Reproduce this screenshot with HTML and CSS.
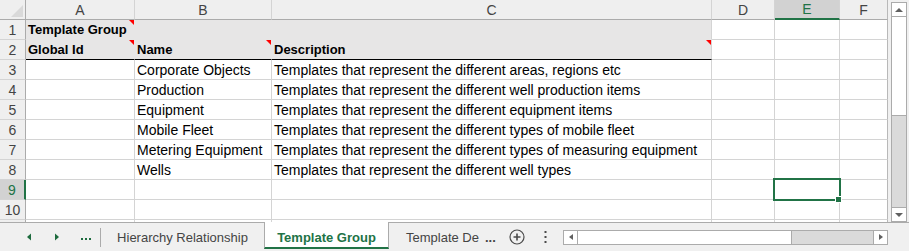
FILE: index.html
```html
<!DOCTYPE html>
<html lang="en">
  <head>
    <meta charset="UTF-8" />
    <title>Template Group</title>
    <link rel="stylesheet" href="styles.css">
  </head>
  <body>
    <div class="sheet">
      <div class="grid">
        <div class="corner"></div>
        <div class="col">A</div>
        <div class="col">B</div>
        <div class="col">C</div>
        <div class="col">D</div>
        <div class="col on">E</div>
        <div class="col last">F</div>

        <div class="row">1</div>
        <div class="fill bold note">Template Group</div>
        <div class="fill"></div>
        <div class="fill edge"></div>
        <div></div><div></div><div class="last"></div>

        <div class="row">2</div>
        <div class="fill line bold note">Global Id</div>
        <div class="fill line bold note">Name</div>
        <div class="fill edge line bold note">Description</div>
        <div></div><div></div><div class="last"></div>

        <div class="row">3</div>
        <div></div>
        <div>Corporate Objects</div>
        <div>Templates that represent the different areas, regions etc</div>
        <div></div><div></div><div class="last"></div>

        <div class="row">4</div>
        <div></div>
        <div>Production</div>
        <div>Templates that represent the different well production items</div>
        <div></div><div></div><div class="last"></div>

        <div class="row">5</div>
        <div></div>
        <div>Equipment</div>
        <div>Templates that represent the different equipment items</div>
        <div></div><div></div><div class="last"></div>

        <div class="row">6</div>
        <div></div>
        <div>Mobile Fleet</div>
        <div>Templates that represent the different types of mobile fleet</div>
        <div></div><div></div><div class="last"></div>

        <div class="row">7</div>
        <div></div>
        <div>Metering Equipment</div>
        <div>Templates that represent the different types of measuring equipment</div>
        <div></div><div></div><div class="last"></div>

        <div class="row">8</div>
        <div></div>
        <div>Wells</div>
        <div>Templates that represent the different well types</div>
        <div></div><div></div><div class="last"></div>

        <div class="row on">9</div>
        <div></div><div></div><div></div><div></div>
        <div class="sel"></div>
        <div class="last"></div>

        <div class="row">10</div>
        <div></div><div></div><div></div><div></div><div></div><div class="last"></div>

        <!-- row 11 only peeks in by a couple of pixels -->
        <div class="row"></div>
        <div></div><div></div><div></div><div></div><div></div><div class="last"></div>
      </div>

      <div class="vscroll">
        <div class="sbtn up"></div>
        <div class="vthumb"></div>
        <div class="vtrack"></div>
        <div class="sbtn down"></div>
      </div>
    </div>

    <div class="tabbar">
      <svg class="nav" width="100" height="28" viewBox="0 0 100 28">
        <polygon points="27,14 31,10.5 31,17.5" fill="#1d6b3e" />
        <polygon points="55,10.5 55,17.5 59,14" fill="#1d6b3e" />
        <rect x="81" y="15" width="2" height="2" fill="#1d6b3e" />
        <rect x="85" y="15" width="2" height="2" fill="#1d6b3e" />
        <rect x="89" y="15" width="2" height="2" fill="#1d6b3e" />
      </svg>
      <div class="sep"></div>
      <div class="tab">Hierarchy Relationship</div>
      <div class="tab active">Template Group</div>
      <div class="tab cut"><span class="clip">Template De</span><span class="dots">...</span></div>
      <svg class="add" width="16" height="16" viewBox="0 0 16 16">
        <circle cx="8" cy="8" r="7" fill="none" stroke="#4a4a4a" stroke-width="1.2" />
        <path d="M8 4.5v7M4.5 8h7" stroke="#4a4a4a" stroke-width="1.6" />
      </svg>
      <svg class="vdots" width="3" height="12" viewBox="0 0 3 12">
        <rect x="0.5" y="0" width="2" height="2" fill="#4a4a4a" />
        <rect x="0.5" y="5" width="2" height="2" fill="#4a4a4a" />
        <rect x="0.5" y="10" width="2" height="2" fill="#4a4a4a" />
      </svg>
      <div class="hscroll">
        <div class="sbtn left"></div>
        <div class="hthumb"></div>
        <div class="htrack"></div>
        <div class="sbtn right"></div>
      </div>
    </div>
  </body>
</html>
```

FILE: styles.css
```css
*,
*::before,
*::after {
  box-sizing: border-box;
}
body {
  margin: 0;
  width: 909px;
  height: 251px;
  overflow: hidden;
  background: #f0f0f0;
  font-family: 'Liberation Sans', Arial, sans-serif;
  color: #000;
}
.sheet {
  display: flex;
  height: 222px;
  overflow: hidden;
}
.grid {
  display: grid;
  grid-template-columns: 26px 109px 137px 440px 63px 65px 48px;
  grid-auto-rows: 20px;
  align-content: start;
  background: #fff;
}
.grid > div {
  position: relative;
  display: flex;
  align-items: flex-end;
  padding: 0 2px 1px;
  border-right: 1px solid #d4d4d4;
  border-bottom: 1px solid #d4d4d4;
  font-size: 14px;
  line-height: 16px;
  white-space: nowrap;
}
.grid > .last {
  border-right-color: #b8b8b8;
}
.grid > .corner,
.grid > .col,
.grid > .row {
  background: #efefef;
  color: #444;
  justify-content: center;
  align-items: center;
  padding: 0;
}
.grid > .corner,
.grid > .col {
  border-bottom-color: #ababab;
}
.grid > .corner,
.grid > .row {
  border-right-color: #ababab;
}
.corner::after {
  content: '';
  position: absolute;
  right: 2px;
  bottom: 2px;
  border-left: 12px solid transparent;
  border-bottom: 12px solid #d9d9d9;
}
.grid > .col.on {
  background: #d2d2d2;
  color: #217346;
  border-bottom: 2px solid #217346;
}
.grid > .row.on {
  background: #d2d2d2;
  color: #217346;
  border-right: 2px solid #217346;
}
.grid > .fill {
  background: #e7e6e6;
  border-right-color: #e7e6e6;
  border-bottom-color: #e7e6e6;
}
.grid > .fill.edge {
  border-right-color: #d4d4d4;
}
.grid > .fill.line {
  border-bottom-color: #000;
}
.grid > .bold {
  font-weight: bold;
  font-size: 13px;
}
.note::after {
  content: '';
  position: absolute;
  top: 0;
  right: 0;
  border-left: 5px solid transparent;
  border-top: 5px solid #ff0000;
}
.grid > .sel {
  z-index: 1;
}
.sel::before {
  content: '';
  position: absolute;
  left: -2px;
  top: -2px;
  width: 68px;
  height: 23px;
  border: 2px solid #217346;
}
.sel::after {
  content: '';
  position: absolute;
  left: 60px;
  top: 16px;
  width: 7px;
  height: 7px;
  background: #217346;
  border: 1px solid #fff;
}

/* scroll bars */
.vscroll {
  display: flex;
  flex-direction: column;
  width: 16px;
  height: 220px;
  margin: 2px 0 0 3px;
  border: 1px solid #ababab;
  background: #dadada;
}
.sbtn {
  position: relative;
  flex: 0 0 14px;
  background: #fff;
}
.sbtn::after {
  content: '';
  position: absolute;
  left: 50%;
  top: 50%;
  transform: translate(-50%, -50%);
}
.up {
  border-bottom: 1px solid #ababab;
}
.up::after {
  border-left: 4px solid transparent;
  border-right: 4px solid transparent;
  border-bottom: 4px solid #606060;
}
.down {
  border-top: 1px solid #ababab;
}
.down::after {
  border-left: 4px solid transparent;
  border-right: 4px solid transparent;
  border-top: 4px solid #606060;
}
.vthumb {
  flex: 0 0 99px;
  background: #fff;
  border-bottom: 1px solid #ababab;
}
.vtrack {
  flex: 1;
}
.hscroll {
  display: flex;
  width: 325px;
  height: 15px;
  margin-left: 16px;
  border: 1px solid #ababab;
  background: #dadada;
}
.left {
  border-right: 1px solid #ababab;
}
.left::after {
  border-top: 3.5px solid transparent;
  border-bottom: 3.5px solid transparent;
  border-right: 4px solid #606060;
}
.right {
  border-left: 1px solid #ababab;
}
.right::after {
  border-top: 3.5px solid transparent;
  border-bottom: 3.5px solid transparent;
  border-left: 4px solid #606060;
}
.hthumb {
  flex: 0 0 214px;
  background: #fff;
  border-right: 1px solid #ababab;
}
.htrack {
  flex: 1;
}

/* sheet tabs */
.tabbar {
  display: flex;
  align-items: center;
  height: 29px;
  border-top: 1px solid #ababab;
  font-size: 13px;
  color: #444;
}
.nav {
  flex: 0 0 100px;
  display: block;
}
.sep {
  width: 1px;
  height: 19px;
  background: #ababab;
}
.tab {
  display: flex;
  align-items: center;
  height: 28px;
  white-space: nowrap;
}
.tab:nth-of-type(2) {
  width: 163px;
  justify-content: center;
}
.tab.active {
  align-self: flex-start;
  width: 125px;
  height: 27px;
  margin-top: -1px;
  padding-top: 5px;
  justify-content: center;
  background: #fff;
  border-left: 1px solid #ababab;
  border-right: 1px solid #ababab;
  border-bottom: 2px solid #217346;
  color: #217346;
  font-weight: bold;
}
.tab.cut {
  width: 107px;
  padding-left: 17px;
}
.clip {
  display: block;
  width: 76px;
}
.dots {
  margin-left: 3px;
  font-weight: bold;
}
.add {
  margin-left: 13px;
}
.vdots {
  margin-left: 19px;
}
```
